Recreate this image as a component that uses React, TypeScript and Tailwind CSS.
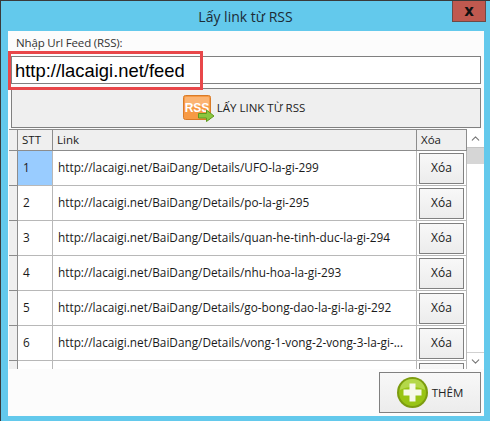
import React from 'react';
import { ChevronUp, ChevronDown } from 'lucide-react';

const rows = [
  'http://lacaigi.net/BaiDang/Details/UFO-la-gi-299',
  'http://lacaigi.net/BaiDang/Details/po-la-gi-295',
  'http://lacaigi.net/BaiDang/Details/quan-he-tinh-duc-la-gi-294',
  'http://lacaigi.net/BaiDang/Details/nhu-hoa-la-gi-293',
  'http://lacaigi.net/BaiDang/Details/go-bong-dao-la-gi-la-gi-292',
  'http://lacaigi.net/BaiDang/Details/vong-1-vong-2-vong-3-la-gi-...',
  null,
];

const RssIcon = () => (
  <svg width="32" height="27" viewBox="0 0 32 27" className="shrink-0">
    <rect x="0.5" y="0.5" width="27" height="24" rx="2" fill="#f79a45" stroke="#d97b28" />
    <rect x="2" y="2" width="24" height="9" rx="1" fill="#fbb473" />
    <text x="14" y="17" textAnchor="middle" fontFamily="'Liberation Sans', sans-serif" fontSize="12" fontWeight="700" fill="#fff">RSS</text>
    <path d="M15.5 18.5h8v-3.500l7.500 6-7.500 5.500v-3.500h-8z" fill="#8cc63f" stroke="#5f9a1f" strokeWidth="1" />
  </svg>
);

const PlusIcon = () => (
  <svg width="31" height="31" viewBox="0 0 31 31" className="shrink-0">
    <circle cx="15.5" cy="15.5" r="15.5" fill="#7c9c10" />
    <circle cx="15.5" cy="15.5" r="13.5" fill="#98c414" />
    <path d="M3 13a12.500 11 0 0 1 25 0c-7-4-18-4-25 0z" fill="#b4d84a" />
    <path d="M12.500 6.500h6v6h6v6h-6v6h-6v-6h-6v-6h6z" fill="#f6f9ea" />
  </svg>
);

export default function App() {
  return (
    <div className="w-[490px] h-[421px] bg-[#63c9ec] border-l border-t border-[#3a3a3a] flex flex-col relative overflow-hidden font-['Open_Sans','Noto_Sans',sans-serif] text-[#1a1a1a]">
      {/* Title bar */}
      <div className="h-[30px] flex items-center justify-center relative shrink-0 text-[14px] text-[#1c2b36]">
        Lấy link từ RSS
        <button className="absolute right-[4px] top-0 w-[34px] h-[21px] bg-[#c0594f] border border-[#6e4a46] border-t-0 flex items-center justify-center text-[#111] text-[15px] leading-none font-bold font-['DejaVu_Sans',sans-serif]">
          x
        </button>
      </div>

      {/* Content */}
      <div className="ml-[7px] mr-[6px] h-[385px] bg-[#fcfcfc] flex flex-col overflow-hidden shrink-0">
        <div className="pl-[8px] pt-[4px] h-[25px] text-[11.5px] leading-[16px] tracking-[-0.15px] text-[#333]">Nhập Url Feed (RSS):</div>
        <div className="mx-[3px] flex flex-col gap-[4px]">
          <div className="h-[28px] bg-white border border-[#808080] flex items-center pl-[3px] pt-[2px] text-[18.4px] text-black font-['Liberation_Sans',sans-serif]">
            http://lacaigi.net/feed
          </div>
          <button className="h-[40px] bg-[#efefef] border border-[#808080] flex items-center justify-center gap-[2px] pr-[4px] text-[11.5px] text-[#222]">
            <RssIcon />
            LẤY LINK TỪ RSS
          </button>
        </div>

        {/* Grid */}
        <div className="mt-[1px] ml-[1px] flex h-[240px] overflow-hidden shrink-0">
          <div className="w-[458px] shrink-0">
            <div className="h-[22px] flex bg-[#efefef] border-t border-b border-[#8c8c8c] text-[11.5px] leading-[20px]">
              <div className="w-[9px] border-r border-[#8c8c8c]" />
              <div className="w-[35px] border-r border-[#8c8c8c] pl-[4px]">STT</div>
              <div className="w-[364px] border-r border-[#8c8c8c] pl-[4px]">Link</div>
              <div className="w-[50px] border-r border-[#8c8c8c] pl-[4px]">Xóa</div>
            </div>
            {rows.map((link, i) => (
              <div key={i} className="h-[35px] flex border-b border-[#b8b8b8] bg-white text-[11.8px]">
                <div className="w-[9px] bg-[#efefef] border-r border-b border-[#8c8c8c] -mb-px" />
                <div className={`w-[35px] border-r border-[#b8b8b8] pl-[5px] flex items-center ${i === 0 ? 'bg-[#99ccff]' : ''}`}>{link && i + 1}</div>
                <div className="w-[364px] border-r border-[#b8b8b8] pl-[5px] flex items-center whitespace-nowrap overflow-hidden">{link}</div>
                <div className="w-[50px] border-r border-[#b8b8b8] flex items-center justify-center">
                  <button className="w-[45px] h-[31px] bg-gradient-to-b from-[#f8f8f8] to-[#ececec] border border-[#808080] text-[12px]">{link && 'Xóa'}</button>
                </div>
              </div>
            ))}
          </div>
          <div className="w-[17px] flex flex-col bg-white shrink-0">
            <div className="h-[17px] mt-[1px] flex items-center justify-center text-[#777]"><ChevronUp size={13} /></div>
            <div className="h-[17px] bg-[#d6d6d6] border-t border-[#c4c4c4]" />
            <div className="flex-1" />
            <div className="h-[17px] flex items-center justify-center border-t border-[#d0d0d0] text-[#777]"><ChevronDown size={13} /></div>
          </div>
        </div>

        {/* Footer */}
        <div className="flex-1 flex justify-end items-start pt-[3px] pr-[3px]">
          <button className="w-[102px] h-[41px] bg-gradient-to-b from-[#f8f8f8] to-[#ececec] border border-[#808080] flex items-center justify-center gap-[4px] text-[11.5px] text-[#222]">
            <PlusIcon />
            THÊM
          </button>
        </div>
      </div>

      {/* Red annotation drawn over the screenshot */}
      <div className="absolute left-[7px] top-[50px] w-[195px] h-[39px] border-[3px] border-[#e8474a] pointer-events-none" />
    </div>
  );
}
